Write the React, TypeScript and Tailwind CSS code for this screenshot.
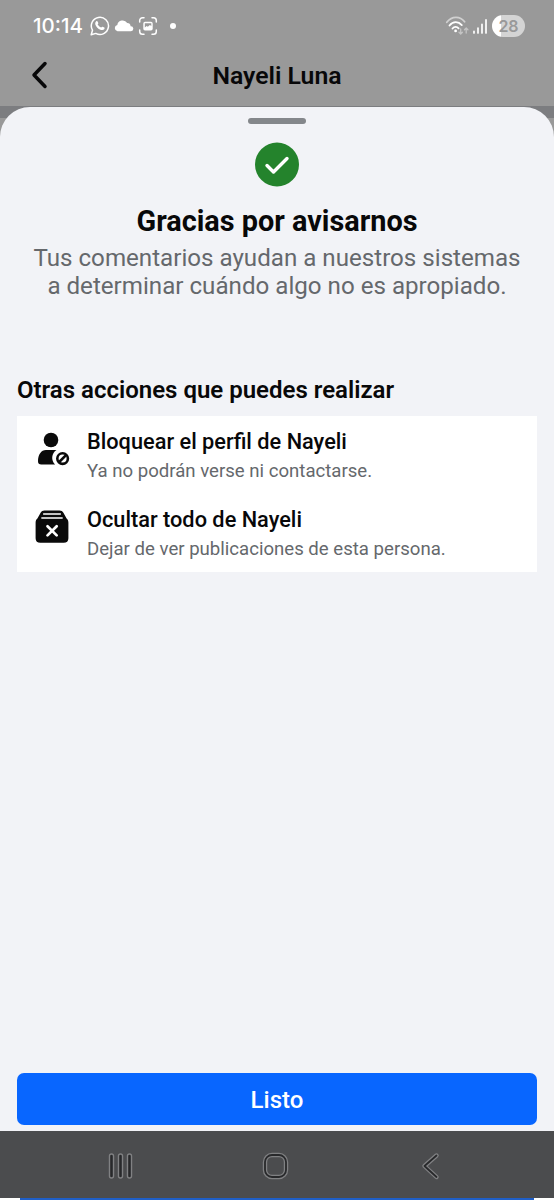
import React from 'react';

interface ActionRowProps {
    icon: React.ReactNode;
    title: string;
    description: string;
}

function StatusBar() {
    return (
        <div className="flex h-[50px] items-start justify-between pt-[13px] pr-[29px] pl-[33px] text-white">
            <div className="flex h-[26px] items-center">
                <span className="w-[57px] font-['Inter',sans-serif] text-[20.5px] leading-[26px] font-medium whitespace-nowrap">10:14</span>
                {/* WhatsApp */}
                <svg width="20" height="20" viewBox="0 0 20 20" fill="none">
                    <path d="M1.2 18.8l1.3-4.6a8.6 8.6 0 1 1 3.3 3.2z" stroke="currentColor" strokeWidth="1.5" strokeLinejoin="round" />
                    <path d="M6.2 5.2c.5-.5 1.1-.4 1.4.2l.7 1.5c.2.5-.4 1-.7 1.4.8 1.6 2 2.7 3.6 3.3.5-.4.9-1.1 1.4-.9l1.7.9c.5.3.3 1.2-.1 1.7-.8 1-2.3 1-3.8.4-2.3-.9-4.2-2.8-5-5-.4-1.4-.1-2.8.8-3.5z" fill="currentColor" />
                </svg>
                <svg width="20" height="12" viewBox="0 0 20 12" className="ml-1" fill="currentColor">
                    <path d="M3.5 11.2a3.1 3.1 0 0 1-.2-6.1A5.4 5.4 0 0 1 13.2 3a3.5 3.5 0 0 1 3.4 3.2 2.5 2.5 0 0 1 .4 5z" />
                </svg>
                {/* Screen capture */}
                <svg width="20" height="20" viewBox="0 0 20 20" className="ml-1" fill="none">
                    <path d="M1.7 6V4.5A2.8 2.8 0 0 1 4.5 1.7H6M14 1.7h1.5A2.8 2.8 0 0 1 18.3 4.5V6M18.3 14v1.5a2.8 2.8 0 0 1-2.8 2.8H14M6 18.3H4.5A2.8 2.8 0 0 1 1.7 15.5V14" stroke="currentColor" strokeWidth="1.5" strokeLinecap="round" />
                    <path fillRule="evenodd" d="M7 5.7h6a1.7 1.7 0 0 1 1.7 1.7v5.3a1.7 1.7 0 0 1-1.7 1.7H7a1.7 1.7 0 0 1-1.7-1.7V7.4A1.7 1.7 0 0 1 7 5.7zm-.2 5.9 1.8-1.5 1.2.7 2.1-1.9 1.4 1.1V7.2H6.8z" fill="currentColor" />
                </svg>
                <span className="ml-[12px] size-[6px] rounded-full bg-white" />
            </div>
            <div className="flex h-[26px] items-center">
                <svg width="25" height="20" viewBox="0 0 25 20" fill="none" strokeLinecap="round">
                    <path d="M1.8 6.2C7-.1 15-.1 19.6 5.8" stroke="#d0d0d0" strokeWidth="1.8" />
                    <path d="M4.5 9.5c3.6-4.3 8.8-4.3 12.3-.4" stroke="#fff" strokeWidth="1.8" />
                    <path d="M7.5 12.5c1.8-2.2 4.4-2.2 6.1-.1" stroke="#fff" strokeWidth="1.8" />
                    <circle cx="10.6" cy="14.9" r="1.4" fill="#fff" />
                    <path d="M15.7 13V18M14 16.3l1.7 1.7 1.7-1.7M21.2 17v-5M19.5 13.7l1.7-1.7 1.7 1.7" stroke="#c4c4c4" strokeWidth="1.3" />
                </svg>
                <svg width="16" height="18" viewBox="0 0 16 18" className="mr-[4px] ml-[2px]" fill="none" stroke="#fff" strokeWidth="1.7" strokeLinecap="round">
                    <path d="M2 14.3v1.7M6 11.1v4.9M10 7.3v8.7M14 2.9v13.1" />
                </svg>
                <div className="flex h-[22px] w-[33px] items-center justify-center rounded-full bg-linear-to-r from-white from-26% to-[#d4d4d4] to-26% font-['Inter',sans-serif] text-[16px] leading-none font-semibold text-[#999]">
                    28
                </div>
            </div>
        </div>
    );
}

function BlockProfileIcon() {
    return (
        <svg width="36" height="36" viewBox="0 0 36 36" fill="#0a0a0a">
            <circle cx="17" cy="9" r="7.3" />
            <path d="M12 19h10.5a9.3 9.3 0 0 0-1.4 14.6H7.3A3.3 3.3 0 0 1 4 30.300C4 23.600 7.200 19 12 19z" />
            <circle cx="28.6" cy="27.6" r="5.3" fill="none" stroke="#0a0a0a" strokeWidth="2.6" />
            <path d="M25.2 31l6.8-6.8" stroke="#0a0a0a" strokeWidth="2.6" />
        </svg>
    );
}

function HideAllIcon() {
    return (
        <svg width="36" height="36" viewBox="0 0 36 36">
            <path d="M10.5 1.4h15c1.8 0 3 .8 3.9 2.300l3.200 5.800c1.200 1.100 1.800 2.400 1.800 4.200v15.500c0 2.900-1.800 4.600-4.700 4.600H6.300c-2.900 0-4.700-1.700-4.700-4.600V13.700c0-1.800.6-3.100 1.800-4.200l3.200-5.800c.9-1.500 2.100-2.300 3.900-2.300z" fill="#0a0a0a" />
            <path d="M9.7 5h16.600M7.900 9h20.200" stroke="#fff" strokeWidth="1.6" strokeLinecap="round" />
            <path d="M13.500 17.200l9.200 9.200M22.700 17.200l-9.200 9.200" stroke="#fff" strokeWidth="2.700" strokeLinecap="round" />
        </svg>
    );
}

function ActionRow({ icon, title, description }: ActionRowProps) {
    return (
        <button className="flex h-[78px] w-full items-start pt-[11px] pl-[17px] text-left">
            <span className="mt-[4px] mr-[17px] size-9 shrink-0">{icon}</span>
            <span className="flex flex-col whitespace-nowrap">
                <span className="text-[21.75px] leading-[30px] font-medium text-[#080809]">{title}</span>
                <span className="text-[18.6px] leading-[28px] text-[#65686c]">{description}</span>
            </span>
        </button>
    );
}

function NavigationBar() {
    return (
        <nav className="flex h-[67px] shrink-0 items-center bg-[#4b4c4e] pt-[2px] pl-[106px]">
            <svg width="30" height="30" viewBox="0 0 30 30" fill="#28292b" stroke="#808183" strokeWidth="1.4">
                <rect x="3.5" y="3" width="4" height="24" rx="2" />
                <rect x="12.5" y="3" width="4" height="24" rx="2" />
                <rect x="21.5" y="3" width="4" height="24" rx="2" />
            </svg>
            <svg width="30" height="30" viewBox="0 0 30 30" className="ml-[125px]" fill="none">
                <rect x="4" y="4" width="21" height="22" rx="7" stroke="#808183" strokeWidth="4.4" />
                <rect x="4" y="4" width="21" height="22" rx="7" stroke="#28292b" strokeWidth="1.8" />
            </svg>
            <svg width="30" height="30" viewBox="0 0 30 30" className="ml-[125px]" fill="none" strokeLinecap="round" strokeLinejoin="round">
                <path d="M20.5 4.500L8.500 15l12 11" stroke="#808183" strokeWidth="4.4" />
                <path d="M20.5 4.500L8.500 15l12 11" stroke="#28292b" strokeWidth="1.8" />
            </svg>
        </nav>
    );
}

export default function App() {
    return (
        <div className="flex h-[1200px] w-[554px] flex-col overflow-hidden bg-[#999] font-['Roboto',sans-serif] text-[#080809]">
            <header className="h-[106px] shrink-0">
                <StatusBar />
                <div className="grid h-[52px] grid-cols-[80px_1fr_80px] items-center">
                    <button className="pl-[30px]">
                        <svg width="20" height="30" viewBox="0 0 20 30" fill="none" stroke="#080809" strokeWidth="3.5" strokeLinecap="round" strokeLinejoin="round">
                            <path d="M15 2.500L4 14l11 11.500" />
                        </svg>
                    </button>
                    <h1 className="text-center text-[24.75px] leading-[30px] font-semibold">Nayeli Luna</h1>
                </div>
            </header>

            <div className="flex min-h-0 flex-1 flex-col bg-linear-to-b from-[#7c7d80] from-[12px] to-[#999] to-[12px]">
                <main className="mt-[1px] flex flex-1 flex-col rounded-t-[30px] bg-[#f2f3f7] px-[17px]">
                    <div className="mt-[11px] h-[6px] w-[58px] shrink-0 self-center rounded-full bg-[#84878b]" />
                    <svg width="44" height="45" viewBox="0 0 44 45" className="mt-[18px] shrink-0 self-center" fill="none">
                        <circle cx="22" cy="22.5" r="22" fill="#24832c" />
                        <path d="M12 23.500l6.500 6.500L32 16.500" stroke="#fff" strokeWidth="3.4" strokeLinecap="round" strokeLinejoin="round" />
                    </svg>
                    <h2 className="mt-[16px] text-center text-[28.85px] leading-[36px] font-bold whitespace-nowrap">Gracias por avisarnos</h2>
                    <p className="mt-[5px] text-center text-[24.15px] leading-[28px] whitespace-nowrap text-[#65686c]">
                        Tus comentarios ayudan a nuestros sistemas
                        <br />
                        a determinar cuándo algo no es apropiado.
                    </p>

                    <h3 className="mt-[75px] text-[24px] leading-[30px] font-semibold whitespace-nowrap">Otras acciones que puedes realizar</h3>
                    <div className="mt-[11px] bg-white">
                        <ActionRow
                            icon={<BlockProfileIcon />}
                            title="Bloquear el perfil de Nayeli"
                            description="Ya no podrán verse ni contactarse."
                        />
                        <ActionRow
                            icon={<HideAllIcon />}
                            title="Ocultar todo de Nayeli"
                            description="Dejar de ver publicaciones de esta persona."
                        />
                    </div>

                    <button className="mt-auto mb-[6px] h-[52px] shrink-0 rounded-[7px] bg-[#0866ff] pt-[2px] text-[24px] font-medium text-white">
                        Listo
                    </button>
                </main>
            </div>

            <NavigationBar />
            <div className="h-[2px] shrink-0 bg-white px-[20px]">
                <div className="h-full bg-[#1f5fc8]" />
            </div>
        </div>
    );
}
